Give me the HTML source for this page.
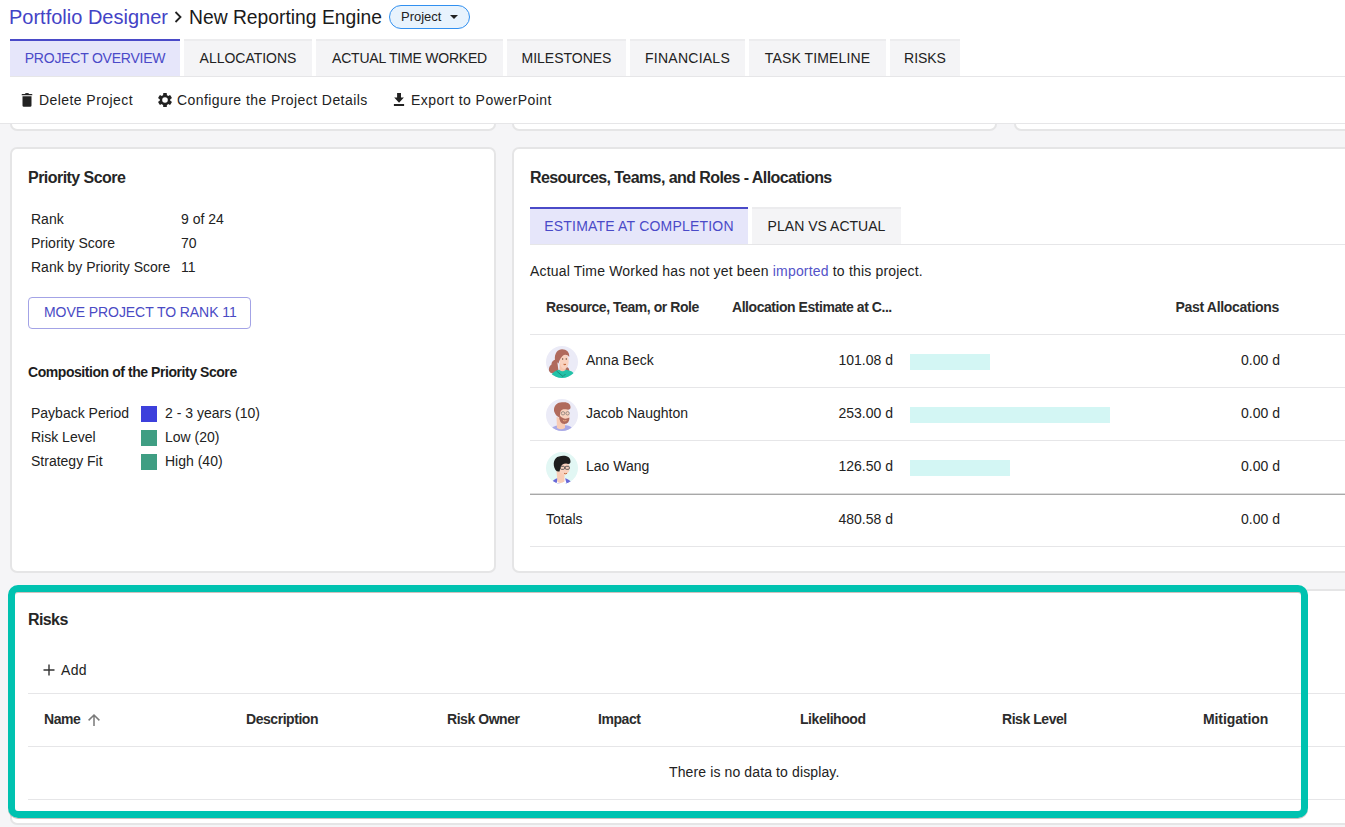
<!DOCTYPE html>
<html><head><meta charset="utf-8">
<style>
*{box-sizing:border-box;margin:0;padding:0}
html,body{width:1345px;height:827px;overflow:hidden;background:#fff}
body{font-family:"Liberation Sans",sans-serif;color:#222;position:relative;font-size:14px}
.a{position:absolute;white-space:nowrap}
.bg{position:absolute;left:0;top:124px;width:1345px;height:703px;background:#f5f5f7}
.card{position:absolute;background:#fff;border:2px solid #e5e5e6;border-radius:7px}
.tab{position:absolute;top:39px;height:37px;background:#f4f4f6;border-top:2px solid #ececee;font-size:14px;color:#222;text-align:center;line-height:35px;letter-spacing:0.2px}
.tab.on{background:#e6e6fa;border-top:2px solid #4a4ac8;color:#4a4ac8}
.hline{position:absolute;height:1px;background:#e6e6e8}
.h16{font-size:16px;font-weight:bold;color:#262626}
.sq{position:absolute;width:16px;height:16px}
.bar{position:absolute;height:16px;background:#d3f6f4}
.th{font-weight:bold;font-size:14px;color:#2c2c2c;letter-spacing:-0.45px}
</style></head><body>
<!-- header -->
<div class="a" style="left:9px;top:6px;font-size:20px;color:#4343c6">Portfolio Designer</div>
<svg class="a" style="left:172px;top:9px" width="12" height="16" viewBox="0 0 12 16"><path d="M3.5 3 L8.5 8 L3.5 13" fill="none" stroke="#222" stroke-width="1.8"/></svg>
<div class="a" style="left:189px;top:7px;font-size:19.3px;color:#1a1a1a">New Reporting Engine</div>
<div class="a" style="left:389px;top:5px;width:81px;height:24px;border:1px solid #3190f0;background:#e8f3fd;border-radius:12px;font-size:13px;line-height:22px;padding-left:11px;color:#222">Project</div>
<svg class="a" style="left:449px;top:14px" width="10" height="6" viewBox="0 0 10 6"><path d="M1 1 L5 5 L9 1 Z" fill="#222"/></svg>

<!-- tabs -->
<div class="tab on" style="left:10px;width:170px;letter-spacing:-0.23px">PROJECT OVERVIEW</div>
<div class="tab" style="left:184px;width:128px;letter-spacing:-0.02px">ALLOCATIONS</div>
<div class="tab" style="left:316px;width:187px;letter-spacing:-0.21px">ACTUAL TIME WORKED</div>
<div class="tab" style="left:507px;width:119px;letter-spacing:-0.02px">MILESTONES</div>
<div class="tab" style="left:630px;width:115px;letter-spacing:0.25px">FINANCIALS</div>
<div class="tab" style="left:749px;width:137px;letter-spacing:0.12px">TASK TIMELINE</div>
<div class="tab" style="left:890px;width:70px;letter-spacing:-0.05px">RISKS</div>
<div class="hline" style="left:10px;top:76px;width:1335px"></div>

<!-- gray background -->
<div class="bg"></div>
<!-- top cut cards -->
<div class="card" style="left:10px;top:80px;width:486px;height:51px"></div>
<div class="card" style="left:512px;top:80px;width:485px;height:51px"></div>
<div class="card" style="left:1014px;top:80px;width:400px;height:51px"></div>

<div style="position:absolute;left:0;top:77px;width:1345px;height:46px;background:#fff"></div>
<!-- toolbar -->
<svg class="a" style="left:21px;top:92px" width="12" height="16" viewBox="0 0 12 16"><path d="M0.7 2.3Q0.7 1.9 1.5 1.9H3.8Q4.1 1.1 6 1.1Q7.9 1.1 8.2 1.9H10.5Q11.3 1.9 11.3 2.3V3.3H0.7z M1.5 4.2h9v9.2a1.4 1.4 0 0 1-1.4 1.4H2.9a1.4 1.4 0 0 1-1.4-1.4z" fill="#222"/></svg>
<div class="a" style="left:39px;top:92px;font-size:14px;letter-spacing:0.43px">Delete Project</div>
<svg class="a" style="left:158px;top:93px" width="14" height="14" viewBox="0 0 14 14"><g fill="#222"><circle cx="7" cy="7" r="5.3"/><rect x="5.15" y="0" width="3.7" height="14" rx="0.6"/><rect x="5.15" y="0" width="3.7" height="14" rx="0.6" transform="rotate(60 7 7)"/><rect x="5.15" y="0" width="3.7" height="14" rx="0.6" transform="rotate(120 7 7)"/></g><circle cx="7" cy="7" r="2.8" fill="#fff"/></svg>
<div class="a" style="left:177px;top:92px;font-size:14px;letter-spacing:0.43px">Configure the Project Details</div>
<svg class="a" style="left:393px;top:92px" width="12" height="16" viewBox="0 0 12 16"><path d="M4.1 1h3.9v4.6h2.9L6.05 10.8 1.2 5.6h2.9z M0.9 12.1h10.2V14H0.9z" fill="#222"/></svg>
<div class="a" style="left:411px;top:92px;font-size:14px;letter-spacing:0.47px">Export to PowerPoint</div>
<div class="hline" style="left:0;top:123px;width:1345px"></div>

<!-- priority score card -->
<div class="card" style="left:10px;top:147px;width:486px;height:426px"></div>
<div class="a h16" style="left:28px;top:169px;letter-spacing:-0.54px">Priority Score</div>
<div class="a" style="left:31px;top:211px">Rank</div>
<div class="a" style="left:181px;top:211px">9 of 24</div>
<div class="a" style="left:31px;top:235px">Priority Score</div>
<div class="a" style="left:181px;top:235px">70</div>
<div class="a" style="left:31px;top:259px">Rank by Priority Score</div>
<div class="a" style="left:181px;top:259px">11</div>
<div class="a" style="left:28px;top:297px;width:223px;height:32px;border:1px solid #a3a3e6;border-radius:4px;color:#4a4ac4;font-size:14px;line-height:28px;padding-left:15px;letter-spacing:-0.07px">MOVE PROJECT TO RANK 11</div>
<div class="a" style="left:28px;top:364px;font-size:14px;font-weight:bold;color:#1d1d1d;letter-spacing:-0.44px">Composition of the Priority Score</div>
<div class="a" style="left:31px;top:405px">Payback Period</div>
<div class="sq" style="left:141px;top:406px;background:#3d40dc"></div>
<div class="a" style="left:165px;top:405px">2 - 3 years (10)</div>
<div class="a" style="left:31px;top:429px">Risk Level</div>
<div class="sq" style="left:141px;top:430px;background:#3f9e83"></div>
<div class="a" style="left:165px;top:429px">Low (20)</div>
<div class="a" style="left:31px;top:453px">Strategy Fit</div>
<div class="sq" style="left:141px;top:454px;background:#3f9e83"></div>
<div class="a" style="left:165px;top:453px">High (40)</div>

<!-- resources card -->
<div class="card" style="left:512px;top:147px;width:900px;height:426px"></div>
<div class="a h16" style="left:530px;top:169px;letter-spacing:-0.58px">Resources, Teams, and Roles - Allocations</div>
<div class="tab on" style="left:530px;top:207px;width:218px;height:38px">ESTIMATE AT COMPLETION</div>
<div class="tab" style="left:752px;top:207px;width:149px;height:38px;letter-spacing:0.02px">PLAN VS ACTUAL</div>
<div class="hline" style="left:530px;top:244px;width:815px"></div>
<div class="a" style="left:530px;top:263px;letter-spacing:0.18px">Actual Time Worked has not yet been <span style="color:#5353c8">imported</span> to this project.</div>
<div class="a th" style="left:546px;top:299px">Resource, Team, or Role</div>
<div class="a th" style="left:732px;top:299px">Allocation Estimate at C...</div>
<div class="a th" style="left:1079px;top:299px;width:200px;text-align:right;letter-spacing:-0.3px">Past Allocations</div>
<div class="hline" style="left:530px;top:334px;width:815px"></div>
<div class="hline" style="left:530px;top:387px;width:815px"></div>
<div class="hline" style="left:530px;top:440px;width:815px"></div>
<div class="hline" style="left:530px;top:493px;width:815px;height:2px;background:linear-gradient(#dcdcdc 50%,#a8a8a8 50%)"></div>
<div class="hline" style="left:530px;top:546px;width:815px"></div>
<!-- avatars -->
<svg class="a" style="left:546px;top:346px" width="32" height="32" viewBox="0 0 32 32">
<defs><clipPath id="c1"><circle cx="16" cy="16" r="16"/></clipPath></defs>
<g clip-path="url(#c1)"><rect width="32" height="32" fill="#ebebf7"/>
<path d="M11 13.5C8 13 5.5 15.5 5.5 18.5C3 20 2 24 4 26.5C6 28 10 27 12.5 25Z" fill="#b06a5c"/>
<path d="M19.3 21Q23.3 20.5 23.3 25.3L19.3 25.8Z" fill="#b06a5c"/>
<path d="M3 33C5 27 10 23.5 16 23.5C21.5 23.5 25.5 24.5 28 27.5L28 33Z" fill="#22c2a8"/>
<path d="M13.5 17L13.5 24Q16.5 26.5 19.5 24L19 17Z" fill="#f6c4ac"/>
<ellipse cx="18.3" cy="15.5" rx="4.4" ry="7.5" fill="#f9d2bf"/>
<path d="M9 14.5C8 7 12 3.2 16 3.2C20.5 3.2 23.8 6 23.2 11C21.5 8.5 18.5 8 16.5 10C14.8 11.8 13.5 14 12.5 17.5Z" fill="#b06a5c"/>
<circle cx="16.6" cy="13" r=".75" fill="#6a4a3a"/><circle cx="20.3" cy="13" r=".75" fill="#6a4a3a"/>
<path d="M17.6 18.3Q18.8 19.3 20 18.3Z" fill="#c0602e" stroke="#c0602e" stroke-width=".6"/>
<path d="M10.5 25L17 30.5L19.5 28" fill="none" stroke="#1a7f6e" stroke-width=".8"/>
</g></svg>
<div class="a" style="left:586px;top:352px">Anna Beck</div>
<div class="a" style="left:813px;top:352px;width:80px;text-align:right">101.08 d</div>
<div class="bar" style="left:910px;top:354px;width:80px"></div>
<div class="a" style="left:1200px;top:352px;width:80px;text-align:right">0.00 d</div>

<svg class="a" style="left:546px;top:399px" width="32" height="32" viewBox="0 0 32 32">
<defs><clipPath id="c2"><circle cx="16" cy="16" r="16"/></clipPath></defs>
<g clip-path="url(#c2)"><rect width="32" height="32" fill="#ebebf7"/>
<path d="M3 33Q6 26.5 13 26.3L20 26.3Q25.5 26.5 28 32L28 33Z" fill="#a9a9e6"/>
<path d="M10.5 18L11 29Q15 31.5 19 29L19 20Z" fill="#f9ccb5"/>
<ellipse cx="18.3" cy="15.8" rx="5.3" ry="7" fill="#f9d2bf"/>
<path d="M13 15.5Q13 25 18.5 25Q23.5 24.5 23.5 18.5Q21 20 18 19.5Q15 19 13 15.5Z" fill="#b06a5c"/>
<path d="M17 21.5Q18.5 22.3 20.5 21.5" fill="none" stroke="#f0b080" stroke-width=".9"/>
<path d="M8 12C7.5 6 12 3 16.5 3.3C21 2.5 25 4.5 24.5 9C24 11 22 10.8 20 10.3C17.5 10 15.5 10.5 14.5 12.5L13.5 18.5Q9.5 17 8 12Z" fill="#b06a5c"/>
<circle cx="17" cy="14.3" r="1.7" fill="none" stroke="#666" stroke-width=".6"/>
<circle cx="21.6" cy="14.3" r="1.7" fill="none" stroke="#666" stroke-width=".6"/>
</g></svg>
<div class="a" style="left:586px;top:405px">Jacob Naughton</div>
<div class="a" style="left:813px;top:405px;width:80px;text-align:right">253.00 d</div>
<div class="bar" style="left:910px;top:407px;width:200px"></div>
<div class="a" style="left:1200px;top:405px;width:80px;text-align:right">0.00 d</div>

<svg class="a" style="left:546px;top:452px" width="32" height="32" viewBox="0 0 32 32">
<defs><clipPath id="c3"><circle cx="16" cy="16" r="16"/></clipPath></defs>
<g clip-path="url(#c3)"><rect width="32" height="32" fill="#e2f7f4"/>
<path d="M4 33Q7 27 12 26L15 33Z M18 26Q24 27 27.5 33L20 33Z" fill="#6868d8"/>
<path d="M10 33L12 26L19 26L21 33Z" fill="#fff"/>
<path d="M10.5 19L11.5 30Q15 32 18.5 29.5L18.5 20Z" fill="#f9ccb5"/>
<ellipse cx="18.3" cy="16" rx="5.4" ry="6.8" fill="#f9d2bf"/>
<path d="M18 21.3Q19.5 22.2 21 21.3" fill="none" stroke="#c0602e" stroke-width=".9"/>
<path d="M9.5 18C6 12 8 5.5 13 4.5C18 3 24.5 4 24.5 9.5C24.5 12.5 22 12 20 11.5C17 11.5 15.5 13 14.5 15.5L13.5 19.5Q11 20 9.5 18Z" fill="#1e1e1e"/>
<rect x="14.5" y="14.3" width="4" height="3" rx=".9" fill="none" stroke="#444" stroke-width=".85"/>
<rect x="19.3" y="14.3" width="4" height="3" rx=".9" fill="none" stroke="#444" stroke-width=".85"/>
</g></svg>
<div class="a" style="left:586px;top:458px">Lao Wang</div>
<div class="a" style="left:813px;top:458px;width:80px;text-align:right">126.50 d</div>
<div class="bar" style="left:910px;top:460px;width:100px"></div>
<div class="a" style="left:1200px;top:458px;width:80px;text-align:right">0.00 d</div>

<div class="a" style="left:546px;top:511px">Totals</div>
<div class="a" style="left:813px;top:511px;width:80px;text-align:right">480.58 d</div>
<div class="a" style="left:1200px;top:511px;width:80px;text-align:right">0.00 d</div>

<!-- risks card -->
<div class="card" style="left:10px;top:589px;width:1400px;height:236px"></div>
<div class="a h16" style="left:28px;top:611px;letter-spacing:-0.6px">Risks</div>
<svg class="a" style="left:43px;top:664px" width="12" height="12" viewBox="0 0 12 12"><path d="M5.3 0.5h1.4v4.8h4.8v1.4H6.7v4.8H5.3V6.7H0.5V5.3h4.8z" fill="#333"/></svg>
<div class="a" style="left:61px;top:662px;letter-spacing:0.3px">Add</div>
<div class="hline" style="left:28px;top:693px;width:1317px"></div>
<div class="a th" style="left:44px;top:711px">Name</div>
<svg class="a" style="left:87px;top:713px" width="14" height="14" viewBox="0 0 14 14"><path d="M7 13V2.2 M1.6 7.4L7 2l5.4 5.4" fill="none" stroke="#7a7a7a" stroke-width="1.5"/></svg>
<div class="a th" style="left:246px;top:711px">Description</div>
<div class="a th" style="left:447px;top:711px">Risk Owner</div>
<div class="a th" style="left:598px;top:711px">Impact</div>
<div class="a th" style="left:800px;top:711px">Likelihood</div>
<div class="a th" style="left:1002px;top:711px">Risk Level</div>
<div class="a th" style="left:1203px;top:711px;letter-spacing:-0.1px">Mitigation</div>
<div class="hline" style="left:28px;top:746px;width:1317px"></div>
<div class="a" style="left:669px;top:764px;letter-spacing:0.12px">There is no data to display.</div>
<div class="hline" style="left:28px;top:799px;width:1317px"></div>

<!-- teal highlight -->
<div style="position:absolute;left:8px;top:585px;width:1300px;height:233px;border:7px solid #00c2b0;border-radius:10px;box-shadow:0 1px 0.5px rgba(90,50,40,.3),inset 0 1px 0.5px rgba(90,50,40,.3)"></div>
</body></html>
